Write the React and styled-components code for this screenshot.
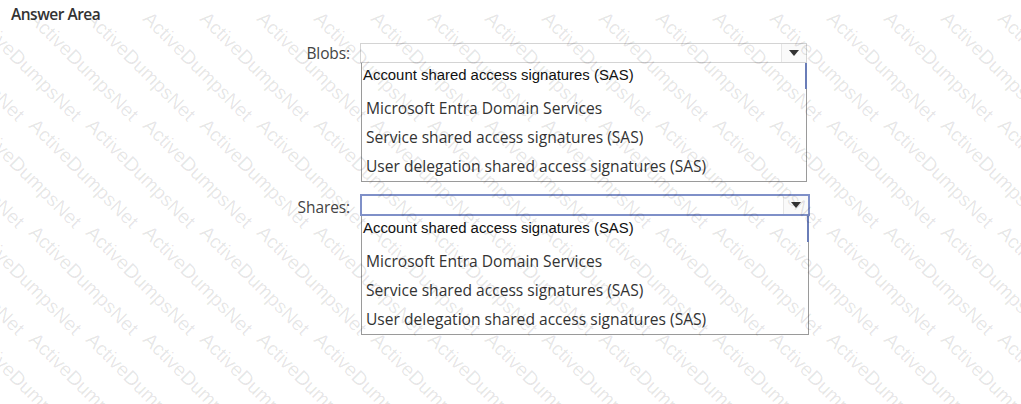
import React from 'react'
import styled, { createGlobalStyle } from 'styled-components'

const GlobalStyle = createGlobalStyle`
  html, body {
    margin: 0;
    padding: 0;
    background: #fff;
  }
  body {
    font-family: "Open Sans", "Noto Sans", sans-serif;
    color: #333;
  }
`

const Page = styled.div`
  position: relative;
  width: 1021px;
  height: 404px;
  overflow: hidden;
  background: #fff;
`

const Title = styled.div`
  padding: 4px 0 0 11px;
  font-family: "Open Sans", sans-serif;
  font-size: 15.5px;
  font-weight: 600;
  letter-spacing: -0.5px;
  color: #333;
  line-height: 20px;
`

const Form = styled.div`
  display: flex;
  flex-direction: column;
  gap: 12px;
  margin-top: 19px;
`

const Field = styled.div`
  display: grid;
  grid-template-columns: 350px ${p => p.$width}px;
  column-gap: 10px;
  align-items: start;
`

const Label = styled.div`
  text-align: right;
  font-size: 15.5px;
  letter-spacing: -0.1px;
  color: #444;
  line-height: 20px;
  padding-top: ${p => p.$offset}px;
`

const Control = styled.div`
  display: flex;
  flex-direction: column;
`

const SelectBox = styled.div`
  display: flex;
  height: ${p => p.$height}px;
  box-sizing: border-box;
  border: 1px solid ${p => (p.$focused ? '#7f90c8' : '#d4d4d4')};
  border-width: ${p => (p.$focused ? '2px' : '1px')};
  background: #fff;
`

const SelectValue = styled.div`
  flex: 1;
`

const ArrowButton = styled.div`
  width: 24px;
  display: flex;
  align-items: center;
  justify-content: center;
  border-left: 1px solid #e6e6e6;
  background: #fafafa;
`

const Arrow = styled.span`
  width: 0;
  height: 0;
  border-left: 5px solid transparent;
  border-right: 5px solid transparent;
  border-top: 6px solid #333;
`

const OptionList = styled.div`
  margin-left: 1px;
  margin-right: ${p => p.$trim}px;
  border: 1px solid #9a9a9a;
  border-top: none;
  background: #fff;
  display: flex;
  flex-direction: column;
`

const FirstOption = styled.div`
  font-family: "Liberation Sans", Arial, sans-serif;
  font-size: 14.9px;
  color: #111;
  height: 26px;
  line-height: 24px;
  padding-left: 1px;
  margin-bottom: 5px;
  border-right: 2px solid #6a7db8;
  margin-right: -1px;
`

const Option = styled.div`
  font-family: "Open Sans", "Noto Sans", sans-serif;
  font-size: 15.6px;
  color: #333;
  height: 29px;
  line-height: 29px;
  padding-left: 4px;
`

const Watermark = styled.div`
  position: absolute;
  top: -8px;
  left: -112px;
  display: grid;
  grid-template-columns: repeat(22, 57px);
  grid-auto-rows: 107px;
  pointer-events: none;
  z-index: 2;
`

const Mark = styled.span`
  display: block;
  width: 0;
  white-space: nowrap;
  font-family: "Liberation Sans", Arial, sans-serif;
  font-size: 19.5px;
  line-height: 20px;
  color: rgba(0, 0, 0, 0.1);
  transform-origin: 0 50%;
  transform: rotate(45deg);
`

const OPTIONS = [
  'Microsoft Entra Domain Services',
  'Service shared access signatures (SAS)',
  'User delegation shared access signatures (SAS)',
]

const Dropdown = ({ label, width, height, focused, trim, labelOffset }) => (
  <Field $width={width}>
    <Label $offset={labelOffset}>{label}</Label>
    <Control>
      <SelectBox $height={height} $focused={focused}>
        <SelectValue />
        <ArrowButton>
          <Arrow />
        </ArrowButton>
      </SelectBox>
      <OptionList $trim={trim}>
        <FirstOption>Account shared access signatures (SAS)</FirstOption>
        {OPTIONS.map(o => (
          <Option key={o}>{o}</Option>
        ))}
      </OptionList>
    </Control>
  </Field>
)

const App = () => (
  <Page>
    <GlobalStyle />
    <Title>Answer Area</Title>
    <Form>
      <Dropdown label="Blobs:" width={447} height={20} trim={0} labelOffset={0} />
      <Dropdown label="Shares:" width={450} height={22} focused trim={1} labelOffset={3} />
    </Form>
    <Watermark>
      {Array.from({ length: 22 * 5 }).map((_, i) => (
        <Mark key={i}>ActiveDumpsNet</Mark>
      ))}
    </Watermark>
  </Page>
)

export default App
